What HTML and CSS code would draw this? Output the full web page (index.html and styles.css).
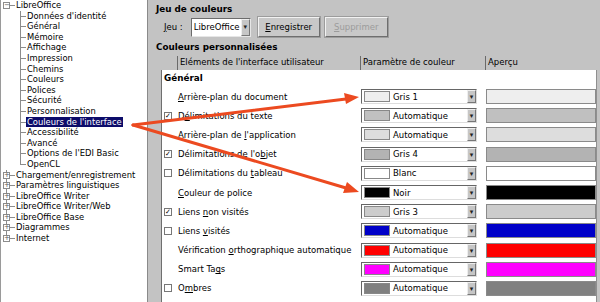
FILE: index.html
```html
<!DOCTYPE html>
<html lang="fr">
<head>
  <meta charset="UTF-8">
  <title>Couleurs de l'interface</title>
  <link rel="stylesheet" href="styles.css">
</head>
<body>
  <div class="arbre">
    <ul class="racine">
      <li class="ouvert"><span class="boite">−</span>LibreOffice
        <ul class="sous">
          <li>Données d'identité</li>
          <li>Général</li>
          <li>Mémoire</li>
          <li>Affichage</li>
          <li>Impression</li>
          <li>Chemins</li>
          <li>Couleurs</li>
          <li>Polices</li>
          <li>Sécurité</li>
          <li>Personnalisation</li>
          <li><span class="choisi">Couleurs de l'interface</span></li>
          <li>Accessibilité</li>
          <li>Avancé</li>
          <li>Options de l'EDI Basic</li>
          <li>OpenCL</li>
        </ul>
      </li>
      <li><span class="boite">+</span>Chargement/enregistrement</li>
      <li><span class="boite">+</span>Paramètres linguistiques</li>
      <li><span class="boite">+</span>LibreOffice Writer</li>
      <li><span class="boite">+</span>LibreOffice Writer/Web</li>
      <li><span class="boite">+</span>LibreOffice Base</li>
      <li><span class="boite">+</span>Diagrammes</li>
      <li><span class="boite">+</span>Internet</li>
    </ul>
  </div>

  <div class="panneau">
    <div class="titre">Jeu de couleurs</div>
    <div class="ligne-jeu">
      <span><u>J</u>eu :</span>
      <div class="combo"><span class="champ">LibreOffice</span><span class="fleche">▾</span></div>
      <button class="bouton"><u>E</u>nregistrer</button>
      <button class="bouton inactif"><u>S</u>upprimer</button>
    </div>
    <div class="titre titre2">Couleurs personnalisées</div>

    <div class="tableau">
      <div class="entete">
        <div></div>
        <div>Eléments de l'interface utilisateur</div>
        <div>Paramètre de couleur</div>
        <div>Aperçu</div>
      </div>
      <div class="corps">
        <div class="groupe">Général</div>

        <div class="rangee">
          <div></div>
          <div><u>A</u>rrière-plan du document</div>
          <div class="liste"><span class="pastille" style="background:#eeeeee"></span>Gris 1<span class="fleche">▾</span></div>
          <div class="apercu" style="background:#eeeeee"></div>
        </div>
        <div class="rangee">
          <div><span class="case coche">✓</span></div>
          <div>D<u>é</u>limitations du texte</div>
          <div class="liste"><span class="pastille" style="background:#c0c0c0"></span>Automatique<span class="fleche">▾</span></div>
          <div class="apercu" style="background:#c0c0c0"></div>
        </div>
        <div class="rangee">
          <div></div>
          <div>Arrière-plan de <u>l</u>'application</div>
          <div class="liste"><span class="pastille" style="background:#dddddd"></span>Automatique<span class="fleche">▾</span></div>
          <div class="apercu" style="background:#dddddd"></div>
        </div>
        <div class="rangee">
          <div><span class="case coche">✓</span></div>
          <div>Délimitations de l'o<u>b</u>jet</div>
          <div class="liste"><span class="pastille" style="background:#b3b3b3"></span>Gris 4<span class="fleche">▾</span></div>
          <div class="apercu" style="background:#b3b3b3"></div>
        </div>
        <div class="rangee">
          <div><span class="case"></span></div>
          <div>Délimitations du <u>t</u>ableau</div>
          <div class="liste"><span class="pastille" style="background:#ffffff"></span>Blanc<span class="fleche">▾</span></div>
          <div class="apercu" style="background:#ffffff"></div>
        </div>
        <div class="rangee">
          <div></div>
          <div><u>C</u>ouleur de police</div>
          <div class="liste"><span class="pastille" style="background:#000000"></span>Noir<span class="fleche">▾</span></div>
          <div class="apercu" style="background:#000000"></div>
        </div>
        <div class="rangee">
          <div><span class="case coche">✓</span></div>
          <div>Liens <u>n</u>on visités</div>
          <div class="liste"><span class="pastille" style="background:#cccccc"></span>Gris 3<span class="fleche">▾</span></div>
          <div class="apercu" style="background:#cccccc"></div>
        </div>
        <div class="rangee">
          <div><span class="case"></span></div>
          <div>Liens <u>v</u>isités</div>
          <div class="liste"><span class="pastille" style="background:#0000c8"></span>Automatique<span class="fleche">▾</span></div>
          <div class="apercu" style="background:#0000c8"></div>
        </div>
        <div class="rangee">
          <div></div>
          <div>Vérification <u>o</u>rthographique automatique</div>
          <div class="liste"><span class="pastille" style="background:#ff0000"></span>Automatique<span class="fleche">▾</span></div>
          <div class="apercu" style="background:#ff0000"></div>
        </div>
        <div class="rangee">
          <div></div>
          <div>Smart Ta<u>g</u>s</div>
          <div class="liste"><span class="pastille" style="background:#ff00ff"></span>Automatique<span class="fleche">▾</span></div>
          <div class="apercu" style="background:#ff00ff"></div>
        </div>
        <div class="rangee">
          <div><span class="case"></span></div>
          <div>O<u>m</u>bres</div>
          <div class="liste"><span class="pastille" style="background:#808080"></span>Automatique<span class="fleche">▾</span></div>
          <div class="apercu" style="background:#808080"></div>
        </div>
      </div>
    </div>
  </div>

  <!-- flèches d'annotation par-dessus la capture -->
  <svg class="fleches" width="600" height="302" viewBox="0 0 600 302">
    <g fill="#ec4a20" stroke="#ec4a20" stroke-width="3" stroke-linecap="round">
      <line x1="133" y1="125" x2="346" y2="99"/>
      <line x1="133" y1="125" x2="346" y2="188"/>
      <polygon stroke="none" points="359,97 344,93 346,104"/>
      <polygon stroke="none" points="359,192 347,182 343,193"/>
    </g>
  </svg>
</body>
</html>
```

FILE: styles.css
```css
body {
  margin: 0;
  width: 600px;
  height: 302px;
  overflow: hidden;
  display: flex;
  background: #c3c3c3;
  font-family: "DejaVu Sans", sans-serif;
  font-size: 8.5px;
  color: #000;
  position: relative;
}

u {
  text-decoration-thickness: 1px;
  text-underline-offset: 1px;
}

/* Arbre des options */
.arbre {
  width: 146px;
  height: 302px;
  background: #fff;
  border-left: 1px solid #9a9a9a;
  border-right: 1px solid #8a8a8a;
  flex-shrink: 0;
  font-size: 8.4px;
}

.arbre ul {
  list-style: none;
  margin: 0;
  padding: 0;
}

.racine {
  padding-top: 1px;
}

.racine > li {
  position: relative;
  padding-left: 15px;
  line-height: 10.6px;
}

.racine > li::before {
  content: '';
  position: absolute;
  left: 5px;
  top: 0;
  height: 10.6px;
  border-left: 1px solid #8c8c8c;
}

.racine > li:last-child::before {
  height: 5px;
}

.racine > li::after {
  content: '';
  position: absolute;
  left: 5px;
  top: 5px;
  width: 9px;
  border-top: 1px solid #8c8c8c;
}

.boite {
  position: absolute;
  left: 2px;
  top: 2px;
  width: 5px;
  height: 5px;
  border: 1px solid #8c8c8c;
  background: #fff;
  font-size: 7px;
  line-height: 5px;
  text-align: center;
  color: #555;
  z-index: 1;
}

.arbre .sous {
  margin-left: -15px;
}

.sous li {
  position: relative;
  padding-left: 26px;
  line-height: 10.6px;
  height: 10.6px;
}

.sous li::before {
  content: '';
  position: absolute;
  left: 19px;
  top: 0;
  bottom: 0;
  border-left: 1px solid #8c8c8c;
}

.sous li:last-child::before {
  bottom: 5px;
}

.sous li::after {
  content: '';
  position: absolute;
  left: 19px;
  top: 5px;
  width: 6px;
  border-top: 1px solid #8c8c8c;
}

.racine > li.ouvert::before {
  display: none;
}

.choisi {
  background: #0c0c6a;
  color: #fff;
  padding: 0 1px;
  margin-left: -1px;
}

/* Panneau de droite */
.panneau {
  flex: 1;
  padding: 3px 0 0 8px;
}

.titre {
  font-weight: bold;
  font-size: 8.8px;
  line-height: 12px;
}

.titre2 {
  margin-top: 4px;
}

.ligne-jeu {
  display: flex;
  align-items: center;
  margin: 2px 0 0 8px;
  height: 20px;
}

.combo {
  display: flex;
  margin-left: 8px;
  width: 60px;
  height: 19px;
  box-sizing: border-box;
  border: 1px solid #6c6c6c;
  border-color: #6c6c6c #e6e6e6 #e6e6e6 #6c6c6c;
}

.combo .champ {
  flex: 1;
  background: #fff;
  line-height: 17px;
  padding-left: 2px;
}

.fleche {
  width: 9px;
  background: #c6c6c6;
  border: 1px solid;
  border-color: #eee #777 #777 #eee;
  box-sizing: border-box;
  font-size: 7px;
  text-align: center;
  color: #222;
}

.combo .fleche {
  line-height: 15px;
}

.bouton {
  font-family: inherit;
  font-size: 8.5px;
  width: 62px;
  height: 20px;
  margin-left: 7px;
  padding: 0;
  background: #c8c8c8;
  border: 1px solid;
  border-color: #f2f2f2 #6e6e6e #6e6e6e #f2f2f2;
  box-shadow: 0 0 0 1px #9c9c9c;
  color: #000;
}

.inactif {
  width: 63px;
  margin-left: 5px;
  color: #9c9c9c;
}

/* Tableau des couleurs */
.tableau {
  margin: 3px 0 0 5px;
  width: 436px;
}

.entete,
.rangee {
  display: grid;
  grid-template-columns: 16px 183px 125px 1fr;
}

.entete {
  height: 14px;
  line-height: 13px;
}

.entete > div + div {
  border-left: 1px solid #6a6a6a;
  padding-left: 2px;
}

.corps {
  background: #fff;
  border-left: 1px solid #6f6f6f;
  border-right: 1px solid #8f8f8f;
  height: 240px;
}

.groupe {
  font-weight: bold;
  font-size: 8.8px;
  line-height: 17px;
  padding-left: 2px;
}

.rangee {
  height: 19.2px;
  align-items: center;
}

.case {
  display: block;
  width: 6px;
  height: 6px;
  margin-left: 2px;
  border: 1px solid #777;
  background: #fff;
  font-size: 7px;
  line-height: 6px;
  text-align: center;
  font-weight: bold;
}

.liste {
  display: flex;
  align-items: center;
  height: 15px;
  width: 116px;
  box-sizing: border-box;
  border: 1px solid;
  border-color: #666 #ddd #ddd #666;
  padding-left: 2px;
}

.pastille {
  width: 24px;
  height: 9px;
  border: 1px solid #888;
  margin-right: 3px;
}

.liste .fleche {
  margin-left: auto;
  height: 13px;
  line-height: 12px;
}

.apercu {
  height: 15px;
  width: 110px;
  box-sizing: border-box;
  border: 1px solid #8a8a8a;
}

.fleches {
  position: absolute;
  left: 0;
  top: 0;
  pointer-events: none;
}
```
